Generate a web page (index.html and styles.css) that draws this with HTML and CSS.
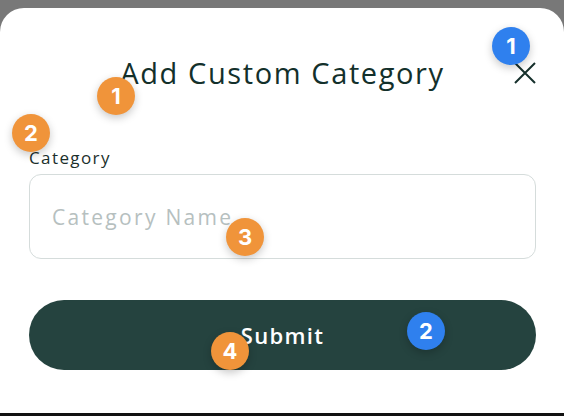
FILE: index.html
```html
<!DOCTYPE html>
<html lang="en">
<head>
<meta charset="utf-8">
<title>Add Custom Category</title>
<link rel="stylesheet" href="styles.css">
</head>
<body>
<div class="page">
  <div class="sheet">
    <div class="header">
      <span></span>
      <h1 class="title">Add Custom Category</h1>
      <button class="close" aria-label="Close">
        <svg width="22" height="22" viewBox="0 0 22 22"><path d="M1 1L21 21M21 1L1 21" stroke="#16302c" stroke-width="2" fill="none"/></svg>
      </button>
    </div>
    <form class="form">
      <label class="label" for="cat">Category</label>
      <input id="cat" class="input" type="text" placeholder="Category Name">
      <button type="button" class="submit">Submit</button>
    </form>
  </div>
  <div class="bottom-bar"></div>

  <span class="badge blue b1">1</span>
  <span class="badge orange o1">1</span>
  <span class="badge orange o2">2</span>
  <span class="badge orange o3">3</span>
  <span class="badge orange o4">4</span>
  <span class="badge blue b2">2</span>
</div>
</body>
</html>
```

FILE: styles.css
```css
* { box-sizing: border-box; }
html, body { margin: 0; padding: 0; }
body {
  background: #787878;
  font-family: "Open Sans", "Noto Sans", sans-serif;
  width: 564px;
  height: 416px;
  overflow: hidden;
}
.page {
  position: relative;
  height: 416px;
  display: flex;
  flex-direction: column;
}
.sheet {
  margin-top: 8px;
  flex: 1;
  background: #fff;
  border-radius: 24px 24px 0 0;
  padding: 0 28px 0 29px;
}
.bottom-bar {
  height: 3px;
  background: #111;
}
.header {
  padding-top: 49px;
  display: grid;
  grid-template-columns: 1fr auto 1fr;
  align-items: center;
}
.title {
  margin: 0;
  font-size: 29px;
  line-height: 32px;
  font-weight: 500;
  letter-spacing: 1.6px;
  color: #13302b;
  white-space: nowrap;
}
.close {
  justify-self: end;
  width: 22px;
  height: 22px;
  padding: 0;
  border: 0;
  background: none;
  display: flex;
}
.form {
  display: flex;
  flex-direction: column;
}
.label {
  margin-top: 59px;
  font-size: 17px;
  line-height: 20px;
  letter-spacing: 1.4px;
  color: #1b2f2c;
}
.input {
  margin-top: 6px;
  height: 85px;
  border: 1px solid #d5dcdb;
  border-radius: 12px;
  padding: 0 22px;
  font-family: inherit;
  font-size: 21px;
  letter-spacing: 2.3px;
  color: #1b2f2c;
  outline: none;
}
.input::placeholder { color: #b6c0bf; }
.submit {
  margin-top: 41px;
  height: 70px;
  border: 0;
  border-radius: 35px;
  background: #25433f;
  color: #fff;
  font-family: inherit;
  font-size: 22px;
  font-weight: 600;
  letter-spacing: 1.3px;
}
.badge {
  position: absolute;
  width: 38px;
  height: 38px;
  border-radius: 50%;
  color: #fff;
  font-family: "Inter", "Liberation Sans", sans-serif;
  font-weight: 700;
  font-size: 22px;
  line-height: 38px;
  text-align: center;
  box-shadow: 0 3px 8px rgba(0,0,0,0.22);
}
.blue { background: #2f80ee; }
.orange { background: #f0943a; }
.b1 { left: 492px; top: 27px; }
.o1 { left: 97px; top: 77px; }
.o2 { left: 12px; top: 114px; }
.o3 { left: 226px; top: 218px; }
.o4 { left: 211px; top: 332px; }
.b2 { left: 407px; top: 312px; }
```
